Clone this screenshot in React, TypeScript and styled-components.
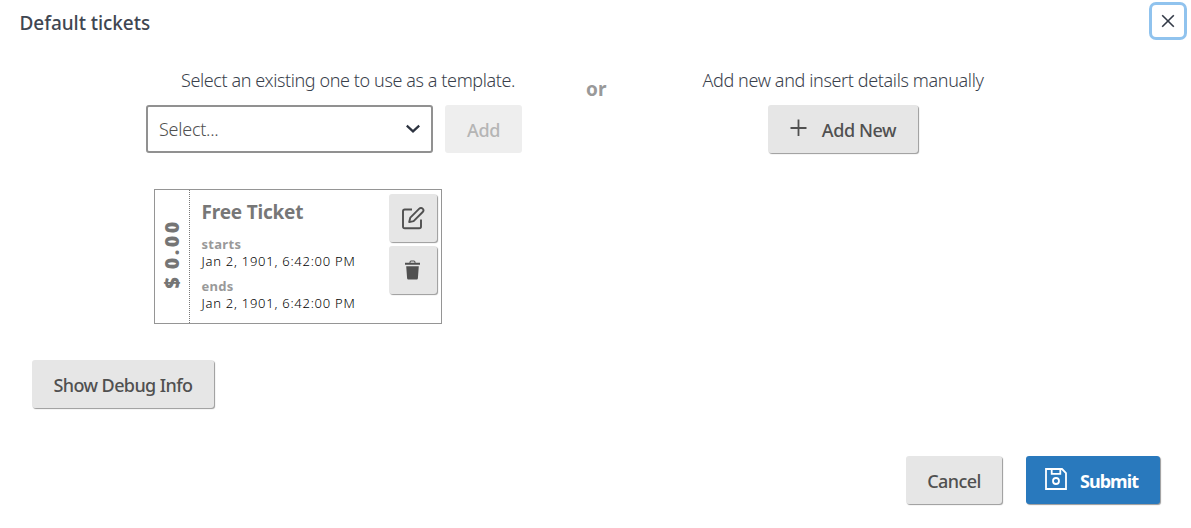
import React from 'react';
import styled, { createGlobalStyle } from 'styled-components';

const GlobalStyle = createGlobalStyle`
  *, *::before, *::after { box-sizing: border-box; }
  body {
    margin: 0;
    background: #fff;
    color: #3a414c;
    font-family: "Noto Sans", "Open Sans", sans-serif;
    font-size: 18px;
  }
  button { font-family: inherit; margin: 0; }
  p, h1, h2 { margin: 0; }
`;

const Dialog = styled.div`
  display: flex;
  flex-direction: column;
  width: 1191px;
  height: 528px;
  overflow: hidden;
`;

const Header = styled.header`
  display: flex;
  justify-content: space-between;
  align-items: flex-start;
  height: 67px;
  padding: 2px 4px 0 19.5px;
`;

const Title = styled.h1`
  color: #3f4651;
  font-size: 19px;
  font-weight: 500;
  line-height: 26px;
  letter-spacing: -0.06px;
  padding-top: 8px;
`;

const CloseButton = styled.button`
  display: flex;
  align-items: center;
  justify-content: center;
  width: 38px;
  height: 38px;
  padding: 0;
  border: 3px solid #90c3ee;
  border-radius: 7px;
  background: #fff;
  color: #333a47;
`;

const Options = styled.section`
  display: flex;
  align-items: flex-start;
  padding-left: 146px;
`;

const ExistingOption = styled.div`
  width: 376px;
`;

const NewOption = styled.div`
  display: flex;
  flex-direction: column;
  align-items: center;
  width: 300px;
  margin-left: 87px;
`;

const Hint = styled.p<{ $indent?: number; $spacing: number }>`
  height: 38px;
  padding-left: ${({ $indent = 0 }) => $indent}px;
  font-size: 18px;
  font-weight: 300;
  line-height: 26px;
  letter-spacing: ${({ $spacing }) => $spacing}px;
  white-space: nowrap;
`;

const Or = styled.span`
  width: 20px;
  margin-left: 64px;
  padding-top: 9px;
  color: #999;
  font-size: 19px;
  font-weight: 700;
  line-height: 26px;
`;

const PickerRow = styled.div`
  display: flex;
  gap: 12px;
`;

const Select = styled.div`
  display: flex;
  align-items: center;
  justify-content: space-between;
  width: 287px;
  height: 48px;
  padding: 0 10px 0 11px;
  border: 2px solid #919191;
  border-radius: 3px;
  color: #505050;
  font-weight: 300;
  letter-spacing: -0.25px;
`;

const Button = styled.button<{ $width: number; $primary?: boolean; $spacing?: number }>`
  display: flex;
  align-items: center;
  justify-content: center;
  flex: none;
  width: ${({ $width }) => $width}px;
  height: 48px;
  padding: 2px 0 0;
  border: 0;
  border-radius: 3px;
  background: ${({ $primary }) => ($primary ? '#2979bd' : '#e6e6e6')};
  box-shadow: 1px 1px 1px rgba(0, 0, 0, 0.4);
  color: ${({ $primary }) => ($primary ? '#fff' : '#505050')};
  font-size: 18px;
  font-weight: ${({ $primary }) => ($primary ? 700 : 500)};
  line-height: 26px;
  letter-spacing: ${({ $spacing = -0.4 }) => $spacing}px;
  white-space: nowrap;

  &:disabled {
    background: #eee;
    box-shadow: none;
    color: #b5b5b5;
  }

  svg { flex: none; margin: -5px 14px 0 0; }
`;

const SubmitButton = styled(Button)`
  padding-right: 3px;
  svg { margin-right: 13px; }
`;

const IconButton = styled(Button)`
  padding: 0;
  svg { margin: 0; }
`;

const Ticket = styled.article`
  display: flex;
  width: 288px;
  height: 135px;
  margin: 36px 0 0 154px;
  border: 1px solid #959595;
`;

const Price = styled.div`
  display: flex;
  align-items: center;
  justify-content: center;
  width: 35px;
  padding-bottom: 5px;
  border-right: 1px dotted #777;
  color: #757575;
  font-size: 18.5px;
  font-weight: 900;
  line-height: 24px;
  letter-spacing: 2.4px;
  word-spacing: -2px;

  span {
    writing-mode: vertical-rl;
    transform: rotate(180deg) scaleY(1.05);
    white-space: nowrap;
  }
`;

const TicketBody = styled.div`
  flex: 1;
  padding: 8px 0 0 11.5px;
`;

const TicketName = styled.h2`
  height: 38px;
  color: #777;
  font-size: 19px;
  font-weight: 700;
  line-height: 28px;
  letter-spacing: -0.2px;
  white-space: nowrap;
`;

const DateLabel = styled.p`
  color: #999;
  font-size: 13px;
  font-weight: 700;
  line-height: 16px;
  letter-spacing: 0.3px;
`;

const DateValue = styled.p`
  height: 26px;
  color: #000;
  font-size: 13px;
  font-weight: 300;
  line-height: 18px;
  letter-spacing: 0.74px;
  white-space: nowrap;
`;

const Actions = styled.div`
  display: flex;
  flex-direction: column;
  gap: 4px;
  padding: 4px 4px 0 0;
`;

const DebugRow = styled.div`
  padding: 36px 0 0 32px;
`;

const Footer = styled.footer`
  display: flex;
  justify-content: flex-end;
  gap: 24px;
  padding: 48px 31px 0 0;
`;

const CloseIcon = () => (
  <svg width="14" height="14" viewBox="0 0 14 14" fill="none" stroke="currentColor" strokeWidth="1.6">
    <path d="M1.2 1.2 12.8 12.8M12.8 1.2 1.2 12.8" />
  </svg>
);

const ChevronIcon = () => (
  <svg width="16" height="10" viewBox="0 0 16 10" fill="none" stroke="#2d3340" strokeWidth="2.2">
    <path d="M1.8 1.6 8 7.4 14.2 1.6" />
  </svg>
);

const PlusIcon = () => (
  <svg width="18" height="18" viewBox="0 0 18 18" fill="none" stroke="currentColor" strokeWidth="1.8">
    <path d="M8.500 .5v16.500M.5 9h16" />
  </svg>
);

const EditIcon = () => (
  <svg width="24" height="24" viewBox="0 0 24 24" fill="none" stroke="currentColor" strokeWidth="1.9">
    <path d="M11 3.5H3.8A1.8 1.8 0 0 0 2 5.300V20.500A1.800 1.800 0 0 0 3.800 22.300H18.200A1.800 1.800 0 0 0 20 20.500V13.500" />
    <path d="M8.200 16.100 9.300 11.700 18.300 2.700A2.100 2.100 0 0 1 21.700 6L12.600 15.100Z" strokeLinejoin="round" />
  </svg>
);

const TrashIcon = () => (
  <svg width="17" height="20" viewBox="0.500 0 17 20" fill="currentColor">
    <path d="M5 3V2.200Q5 .6 6.600 .6H9.400Q11 .6 11 2.200V3H10V2.200Q10 1.600 9.400 1.600H6.600Q6 1.600 6 2.200V3Z" />
    <path d="M.5 2.700H15.500V4.800H.5ZM1.700 6.300H14.300L13.400 18.200Q13.300 19.400 12.200 19.400H3.800Q2.700 19.400 2.600 18.200Z" />
  </svg>
);

const SaveIcon = () => (
  <svg width="22" height="22" viewBox="0 0 22 22" fill="none" stroke="currentColor" strokeWidth="1.8">
    <path d="M1 1H17L21 5V21H1Z" />
    <path d="M6.700 1V5.800H15.300V1" />
    <circle cx="11" cy="13" r="3" />
  </svg>
);

export default function App() {
  return (
    <>
      <GlobalStyle />
      <Dialog role="dialog" aria-label="Default tickets">
        <Header>
          <Title>Default tickets</Title>
          <CloseButton aria-label="Close"><CloseIcon /></CloseButton>
        </Header>
        <Options>
          <ExistingOption>
            <Hint $indent={35} $spacing={-0.4}>Select an existing one to use as a template.</Hint>
            <PickerRow>
              <Select><span>Select...</span><ChevronIcon /></Select>
              <Button $width={77} disabled>Add</Button>
            </PickerRow>
          </ExistingOption>
          <Or>or</Or>
          <NewOption>
            <Hint $spacing={-0.37}>Add new and insert details manually</Hint>
            <Button $width={150}><PlusIcon />Add New</Button>
          </NewOption>
        </Options>
        <Ticket>
          <Price><span>$ 0.00</span></Price>
          <TicketBody>
            <TicketName>Free Ticket</TicketName>
            <DateLabel>starts</DateLabel>
            <DateValue>Jan 2, 1901, 6:42:00 PM</DateValue>
            <DateLabel>ends</DateLabel>
            <DateValue>Jan 2, 1901, 6:42:00 PM</DateValue>
          </TicketBody>
          <Actions>
            <IconButton $width={48} aria-label="Edit"><EditIcon /></IconButton>
            <IconButton $width={48} aria-label="Delete"><TrashIcon /></IconButton>
          </Actions>
        </Ticket>
        <DebugRow>
          <Button $width={182} $spacing={-0.6}>Show Debug Info</Button>
        </DebugRow>
        <Footer>
          <Button $width={96} $spacing={-0.6}>Cancel</Button>
          <SubmitButton $width={134} $primary $spacing={-0.95}><SaveIcon />Submit</SubmitButton>
        </Footer>
      </Dialog>
    </>
  );
}
